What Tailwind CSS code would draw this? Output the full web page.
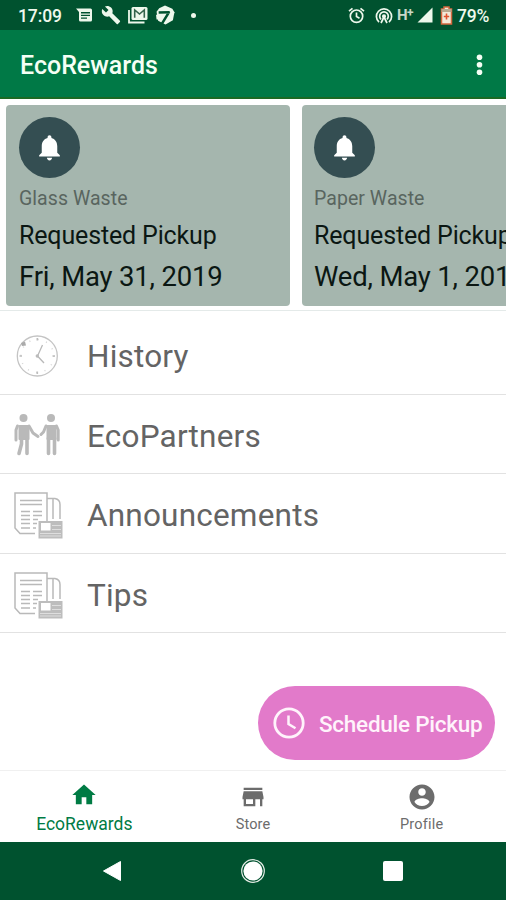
<!DOCTYPE html>
<html lang="en">
<head>
<meta charset="utf-8">
<title>EcoRewards</title>
<script src="https://cdn.jsdelivr.net/npm/@tailwindcss/browser@4"></script>
</head>
<body class="bg-white">
<svg class="hidden">
  <symbol id="bell" viewBox="0 0 24 24"><path d="M12 22c1.100 0 2-.9 2-2h-4c0 1.100.9 2 2 2zm6-6v-5c0-3.070-1.640-5.640-4.500-6.320V4c0-.83-.67-1.500-1.500-1.500s-1.500.67-1.500 1.500v.68C7.630 5.360 6 7.920 6 11v5l-2 2v1h16v-1l-2-2z"/></symbol>
  <symbol id="news" viewBox="0 0 50 50">
    <g fill="none" stroke="#b9b9b9" stroke-width="1.500">
      <path d="M22 43.500H7L2 38V3h32v28M34 8.500h8q5 1 5 6V29M40 9v20"/>
      <path d="M7 10.500h22M7 14.500h22"/>
      <path d="M8 21.500h9M8 25.500h9M8 29.500h9M8 33.500h9M8 38h9M20 21.500h9M20 25.500h9M20 29.500h5M20 33.500h4M20 38h3" stroke-width="1.600"/>
    </g>
    <rect x="25.500" y="31" width="24" height="17.500" fill="#bdbdbd"/>
    <rect x="28" y="33" width="9.500" height="7.500" fill="#fff"/>
    <path d="M39 35.500h9M39 39.500h9M27 43.500h21M27 46h21" stroke="#dedede"/>
  </symbol>
</svg>
<div class="relative flex h-[900px] w-[506px] flex-col overflow-hidden bg-white font-['Roboto','Liberation_Sans',sans-serif]">
  <header class="flex h-[30px] shrink-0 items-center bg-[#00522f] pl-[18px] pr-[16px] text-[#eef8ec]">
    <span class="w-[58px] pt-[2px] text-[17.500px] font-medium leading-[30px] tracking-[-0.1px] whitespace-nowrap">17:09</span>
    <svg class="h-[18px] w-[18px]" viewBox="0 0 18 18" fill="currentColor"><path fill-rule="evenodd" d="M0 2.500h14.500q1.500 0 1.500 1.500v10q0 1.500-1.500 1.500h-10Q3 15.500 3 14V6zM5 6v1.400h9V6zm0 2.700v1.400h9V8.700zm0 2.700v1.400h6v-1.400z"/></svg>
    <svg class="ml-[7px] h-[20px] w-[20px]" viewBox="0 0 24 24" fill="currentColor"><path d="M22.700 19l-9.100-9.100c.9-2.300.4-5-1.500-6.900-2-2-5-2.400-7.400-1.300L9 6 6 9 1.600 4.700C.4 7.100.9 10.100 2.900 12.100c1.900 1.900 4.600 2.400 6.900 1.500l9.100 9.100c.4.400 1 .4 1.400 0l2.300-2.300c.5-.4.5-1.100.1-1.400z"/></svg>
    <svg class="ml-[7px] h-[18px] w-[20px]" viewBox="0 0 20 18"><path d="M1 4v12.500h15.500" fill="none" stroke="currentColor" stroke-width="1.800"/><rect x="3.500" y="1" width="16" height="13" rx="1.500" fill="currentColor"/><path d="M6.700 11.800V4l4.800 4 4.800-4v7.800" fill="none" stroke="#35644c" stroke-width="1.600"/></svg>
    <svg class="ml-[8px] h-[20px] w-[19px]" viewBox="0 0 18 19"><path d="M8.500.5 15.500 3.500 17.500 7 16 14.500 9 18.500 2 15 .5 6.500 3 3z" fill="currentColor"/><path d="M2.500 7.200 13 6.800M12.500 6.500 5.500 18" fill="none" stroke="#00522f" stroke-width="2.400"/><path d="M0 9.300h3v4.500H.5z" fill="currentColor"/></svg>
    <span class="ml-[16px] h-[5px] w-[5px] rounded-full bg-current"></span>
    <svg class="ml-auto h-[17px] w-[17px]" viewBox="0 0 17 17" fill="none" stroke="currentColor" stroke-width="1.700"><circle cx="8.500" cy="9.200" r="6.200"/><path d="M1 4.200 4.500 1.300M16 4.200 12.500 1.300M8.500 5.500v4l3 1.700"/></svg>
    <svg class="ml-[10px] h-[17px] w-[18px]" viewBox="0 0 18 17" fill="none" stroke="currentColor" stroke-width="1.700"><path d="M4 15.200a7.600 7.600 0 1 1 10 0M6 12.300a4.300 4.300 0 1 1 6 0"/><circle cx="9" cy="9.300" r="1.200" fill="currentColor"/><path d="m6 16 3-6 3 6"/></svg>
    <span class="ml-[4px] w-[18px] text-[15px] font-bold leading-[18px] tracking-[-0.5px] whitespace-nowrap text-[#c9d8c9]">H<span class="relative -top-[3px] text-[12px]">+</span></span>
    <svg class="ml-[2px] h-[16px] w-[16px]" viewBox="0 0 16 16"><path d="M15.500.500v15H.5z" fill="currentColor"/></svg>
    <svg class="ml-[7px] h-[19px] w-[13px]" viewBox="0 0 13 19"><path d="M4 1h5v2h2.500v15h-10V3H4z" fill="#f3ead9" stroke="#d4683f" stroke-width="1.500"/><path d="M1.500 3h10v3h-10z" fill="#b9a98f"/><path d="M6.500 7.500v6M3.800 10.500h5.400" stroke="#e0532f" stroke-width="1.600"/></svg>
    <span class="ml-[4px] w-[33px] pt-[2px] text-[17.500px] font-medium leading-[28px] tracking-[-0.2px] whitespace-nowrap">79%</span>
  </header>
  <div class="flex h-[69px] shrink-0 items-center justify-between border-b-2 border-[#1b6a24] bg-[#007946] pl-[20px] pr-[23px] text-[#f5fff5]">
    <h1 class="pt-[5px] text-[25px] font-medium">EcoRewards</h1>
    <svg class="mt-[2px] h-[22px] w-[7px]" viewBox="0 0 7 22" fill="currentColor"><circle cx="3.500" cy="3.200" r="2.800"/><circle cx="3.500" cy="10.700" r="2.800"/><circle cx="3.500" cy="18.200" r="2.800"/></svg>
  </div>
  <section class="flex h-[212px] shrink-0 gap-[12px] overflow-hidden border-b border-[#e4eae9] pl-[6px] pt-[6px]">
    <article class="flex h-[201px] w-[284px] shrink-0 flex-col rounded-[4px] bg-[#a5b6ae] pl-[13px] pt-[12px] text-[#0b1713]">
      <div class="flex h-[61px] w-[61px] items-center justify-center rounded-full bg-[#344e52]"><svg class="h-[31px] w-[31px]" fill="#fff"><use href="#bell"/></svg></div>
      <p class="mt-[8px] text-[19.500px] leading-[26px] tracking-[0.050px] text-[#59655f]">Glass Waste</p>
      <p class="mt-[7px] text-[25px] leading-[34px] tracking-[-0.150px]">Requested Pickup</p>
      <p class="mt-[6px] text-[27.500px] leading-[36px] tracking-[-0.180px]">Fri, May 31, 2019</p>
    </article>
    <article class="flex h-[201px] w-[284px] shrink-0 flex-col whitespace-nowrap rounded-[4px] bg-[#a5b6ae] pl-[12px] pt-[12px] text-[#0b1713]">
      <div class="flex h-[61px] w-[61px] items-center justify-center rounded-full bg-[#344e52]"><svg class="h-[31px] w-[31px]" fill="#fff"><use href="#bell"/></svg></div>
      <p class="mt-[8px] text-[19.500px] leading-[26px] tracking-[0.050px] text-[#59655f]">Paper Waste</p>
      <p class="mt-[7px] text-[25px] leading-[34px] tracking-[-0.150px]">Requested Pickup</p>
      <p class="mt-[6px] text-[27.500px] leading-[36px] tracking-[-0.180px]">Wed, May 1, 2019</p>
    </article>
  </section>
  <ul class="flex shrink-0 flex-col text-[31.500px] tracking-[0.200px] text-[#646464]">
    <li class="flex h-[84px] items-center border-b border-[#e2e2e2] pl-[13px] pt-[6px]">
      <svg class="h-[50px] w-[50px]" viewBox="0 0 50 50" fill="none"><circle cx="24.300" cy="25" r="20" stroke="#c4c4c4" stroke-width="1.300"/><circle cx="24.300" cy="25" r="16.500" stroke="#d6d6d6" stroke-width="1.500" stroke-dasharray="1 7.640"/><path d="M24.300 7v2.500M24.300 40.500v2.500M6.500 25h2.500M39.500 25h2.500" stroke="#bdbdbd" stroke-width="1.600"/><path d="M29.500 14 24.500 25l6.500 7" stroke="#b9b9b9" stroke-width="1.300"/><circle cx="24.300" cy="25" r="1.700" fill="#bbb"/><path d="m8 12 4-1.500 1 4-4 .5z" fill="#aaa"/></svg>
      <span class="ml-[24px] pt-[3px]">History</span>
    </li>
    <li class="flex h-[79px] items-center border-b border-[#e2e2e2] pl-[13px] pt-[4px]">
      <svg class="h-[50px] w-[50px]" viewBox="0 0 50 50" fill="#b9b9b9" stroke="#b9b9b9" stroke-linecap="round" stroke-linejoin="round"><circle cx="10.500" cy="7" r="4" stroke="none"/><circle cx="38" cy="7" r="4" stroke="none"/><path d="M6.500 15h9v13h-9z" stroke-width="2"/><path d="M34.500 15h8v13h-8z" stroke-width="2"/><path d="M4.500 15 3 19v10M16 15l4 7 5 3.500M33 15l-2.500 6-2.500 2.500M43.500 15l1.700 4v10" fill="none" stroke-width="3"/><path d="M8.500 27v6L6 42.500M14 27v15.500M35.500 27v15.500M41.500 27v15.500" fill="none" stroke-width="3.600"/></svg>
      <span class="ml-[24px] pt-[2px]">EcoPartners</span>
    </li>
    <li class="flex h-[80px] items-center border-b border-[#e2e2e2] pl-[13px] pt-[3px]">
      <svg class="h-[50px] w-[50px]"><use href="#news"/></svg>
      <span class="ml-[24px] pt-[2px]">Announcements</span>
    </li>
    <li class="flex h-[79px] items-center border-b border-[#e2e2e2] pl-[13px] pt-[3px]">
      <svg class="h-[50px] w-[50px]"><use href="#news"/></svg>
      <span class="ml-[24px] pt-[2px]">Tips</span>
    </li>
  </ul>
  <button class="absolute left-[258px] top-[686px] flex h-[74px] w-[237px] items-center whitespace-nowrap rounded-full bg-[#e27aca] pl-[15px] text-[#fff3fb]">
    <svg class="h-[32px] w-[32px]" viewBox="0 0 32 32" fill="none" stroke="currentColor" stroke-width="2.800"><circle cx="16" cy="16" r="14.200"/><path d="M15.500 8.500v8.500l7 4.200" stroke-width="2.500"/></svg>
    <span class="ml-[14px] pt-[3px] text-[22.500px] font-medium tracking-[-0.250px]">Schedule Pickup</span>
  </button>
  <nav class="mt-auto grid h-[72px] shrink-0 grid-cols-3 border-t border-[#f0f0f0] text-[#6c6c6c]">
    <a class="flex flex-col items-center text-[#007b44]">
      <svg class="mt-[10px] h-[28px] w-[28px]" viewBox="0 0 24 24" fill="currentColor"><path d="M10 20v-6h4v6h5v-8h3L12 3 2 12h3v8z"/></svg>
      <span class="mt-[3px] text-[17.500px] leading-[24px]">EcoRewards</span>
    </a>
    <a class="flex flex-col items-center">
      <svg class="mt-[12px] h-[28px] w-[28px]" viewBox="0 0 24 24" fill="currentColor"><path d="M20 4H4v2h16V4zm1 10v-2l-1-5H4l-1 5v2h1v6h10v-6h4v6h2v-6h1zm-9 4H6v-4h6v4z"/></svg>
      <span class="mt-[2px] text-[14.500px] leading-[24px] tracking-[0.100px]">Store</span>
    </a>
    <a class="flex flex-col items-center">
      <svg class="mt-[11px] h-[30px] w-[30px]" viewBox="0 0 24 24" fill="currentColor"><path d="M12 2C6.480 2 2 6.480 2 12s4.480 10 10 10 10-4.480 10-10S17.520 2 12 2zm0 3c1.660 0 3 1.340 3 3s-1.340 3-3 3-3-1.340-3-3 1.340-3 3-3zm0 14.200c-2.500 0-4.710-1.280-6-3.220.03-1.990 4-3.080 6-3.080 1.990 0 5.970 1.090 6 3.080-1.290 1.940-3.500 3.220-6 3.220z"/></svg>
      <span class="mt-[1px] text-[14.500px] leading-[24px] tracking-[0.200px]">Profile</span>
    </a>
  </nav>
  <footer class="flex h-[58px] shrink-0 items-center bg-[#00522f] pl-[102px]">
    <svg class="h-[22px] w-[20px]" viewBox="0 0 20 22"><path d="M1.500 11 18.500 1.500v19z" fill="#fff" stroke="#fff" stroke-linejoin="round"/></svg>
    <svg class="ml-[119px] h-[24px] w-[24px]" viewBox="0 0 24 24"><circle cx="12" cy="12" r="11.300" fill="#00522f" stroke="#e4ece6" stroke-width="1.200"/><circle cx="12" cy="12" r="9.600" fill="#fff"/></svg>
    <span class="ml-[118px] h-[20px] w-[20px] rounded-[2px] bg-white"></span>
  </footer>
</div>
</body>
</html>
